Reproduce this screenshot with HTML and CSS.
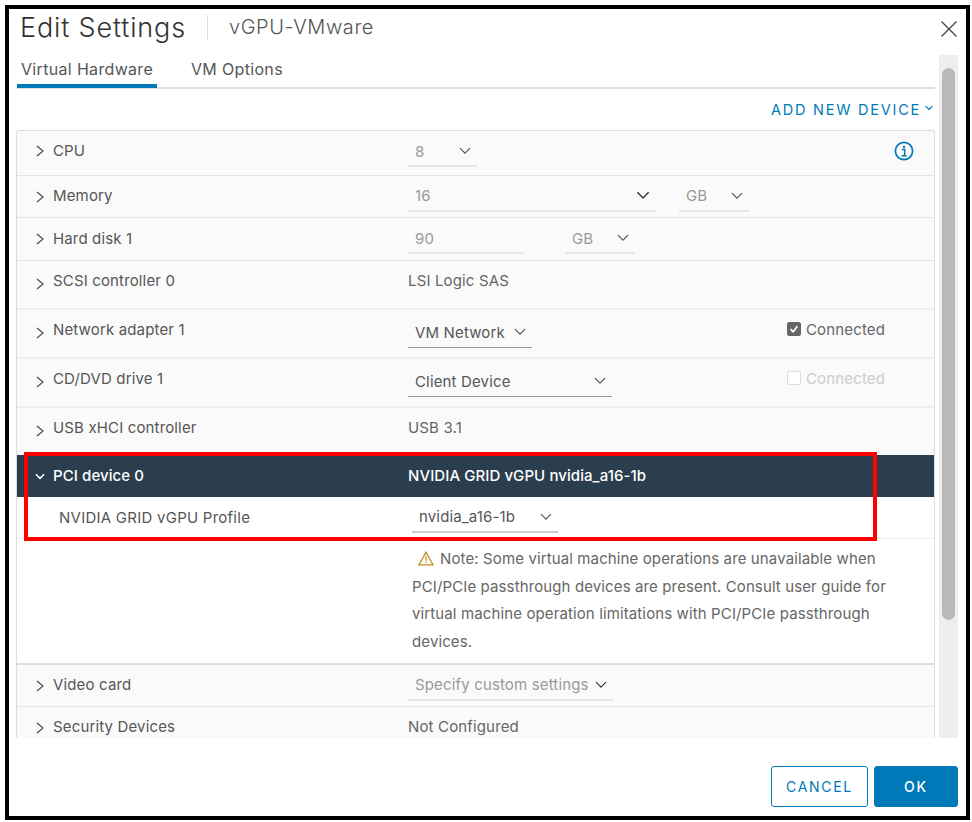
FILE: index.html
```html
<!DOCTYPE html>
<html lang="en">
<head>
<meta charset="utf-8">
<title>Edit Settings</title>
<link rel="stylesheet" href="styles.css">
</head>
<body>
<svg width="0" height="0" class="defs">
  <symbol id="chev-right" viewBox="0 0 8 12"><path d="M1 1l6 5-6 5" fill="none" stroke="currentColor" stroke-width="1.4"/></symbol>
  <symbol id="chev-down" viewBox="0 0 12 8"><path d="M1 1.2l5 5 5-5" fill="none" stroke="currentColor" stroke-width="1.2"/></symbol>
  <symbol id="chev-down-bold" viewBox="0 0 12 8"><path d="M1 1.2l5 5 5-5" fill="none" stroke="currentColor" stroke-width="1.8"/></symbol>
</svg>
<main class="dialog">
  <header class="head">
    <h1 class="title">Edit Settings</h1>
    <span class="vm-name">vGPU-VMware</span>
    <svg class="close" viewBox="0 0 16 16"><path d="M.5.5l15 15M15.5.5l-15 15" stroke="#444" stroke-width="1.3" fill="none"/></svg>
  </header>
  <div class="content">
    <div class="pane">
      <nav class="tabs">
        <span class="tab active">Virtual Hardware</span>
        <span class="tab">VM Options</span>
      </nav>
      <div class="actions">
        <span class="add-device">ADD NEW DEVICE</span>
        <svg class="add-chev"><use href="#chev-down-bold"/></svg>
      </div>
      <div class="table">
        <div class="row h45">
          <div class="label up6"><svg class="chev"><use href="#chev-right"/></svg>CPU</div>
          <div class="value up2">
            <div class="select off w69"><span>8</span><svg class="down"><use href="#chev-down"/></svg></div>
          </div>
          <svg class="info" viewBox="0 0 20 20"><circle cx="10" cy="10" r="8.6" fill="none" stroke="#0079b8" stroke-width="1.7"/><circle cx="10" cy="5.9" r="1.2" fill="#0079b8"/><path d="M7.8 8.6h2.9v6M7.6 14.8h5" fill="none" stroke="#0079b8" stroke-width="1.5"/></svg>
        </div>
        <div class="row h42">
          <div class="label up2"><svg class="chev"><use href="#chev-right"/></svg>Memory</div>
          <div class="value">
            <div class="select off w248"><span>16</span><svg class="down big"><use href="#chev-down"/></svg></div>
            <div class="select off w70 gap23"><span>GB</span><svg class="down"><use href="#chev-down"/></svg></div>
          </div>
        </div>
        <div class="row h43">
          <div class="label up2"><svg class="chev"><use href="#chev-right"/></svg>Hard disk 1</div>
          <div class="value">
            <div class="select off w116"><span>90</span></div>
            <div class="select off w70 gap41"><span>GB</span><svg class="down"><use href="#chev-down"/></svg></div>
          </div>
        </div>
        <div class="row h49">
          <div class="label up9"><svg class="chev low"><use href="#chev-right"/></svg>SCSI controller 0</div>
          <div class="value plain up9">LSI Logic SAS</div>
        </div>
        <div class="row h49">
          <div class="label up9"><svg class="chev low"><use href="#chev-right"/></svg>Network adapter 1</div>
          <div class="value up2">
            <div class="select on w124"><span>VM Network</span><svg class="down"><use href="#chev-down"/></svg></div>
          </div>
          <div class="check up8"><span class="box checked"><svg viewBox="0 0 14 14"><path d="M3 7.2l3 3 5-6.5" fill="none" stroke="#fff" stroke-width="2"/></svg></span>Connected</div>
        </div>
        <div class="row h49">
          <div class="label up9"><svg class="chev low"><use href="#chev-right"/></svg>CD/DVD drive 1</div>
          <div class="value up2">
            <div class="select on w204"><span>Client Device</span><svg class="down"><use href="#chev-down"/></svg></div>
          </div>
          <div class="check up8 muted"><span class="box"></span>Connected</div>
        </div>
        <div class="row h47">
          <div class="label up8"><svg class="chev low"><use href="#chev-right"/></svg>USB xHCI controller</div>
          <div class="value plain up8">USB 3.1</div>
        </div>
        <div class="row expanded">
          <div class="label strong up2"><svg class="chev-open"><use href="#chev-down-bold"/></svg>PCI device 0</div>
          <div class="value plain strong up2">NVIDIA GRID vGPU nvidia_a16-1b</div>
        </div>
        <div class="row sub">
          <div class="label sub-label">NVIDIA GRID vGPU Profile</div>
          <div class="value">
            <div class="select soft w146"><span>nvidia_a16-1b</span><svg class="down"><use href="#chev-down"/></svg></div>
          </div>
        </div>
        <div class="note">
          <p class="note-text"><svg class="warn" viewBox="0 0 16 15"><path d="M8 1.2l7 12.6H1z" fill="none" stroke="#c28b1a" stroke-width="1.3"/><path d="M8 5.2v4.6M8 10.8v1.5" stroke="#c28b1a" stroke-width="1.3"/></svg>Note: Some virtual machine operations are unavailable when PCI/PCIe passthrough devices are present. Consult user guide for virtual machine operation limitations with PCI/PCIe passthrough devices.</p>
        </div>
        <div class="row h42">
          <div class="label up2"><svg class="chev"><use href="#chev-right"/></svg>Video card</div>
          <div class="value">
            <div class="select off w205"><span>Specify custom settings</span><svg class="down dark"><use href="#chev-down"/></svg></div>
          </div>
        </div>
        <div class="row h43 last">
          <div class="label up4"><svg class="chev"><use href="#chev-right"/></svg>Security Devices</div>
          <div class="value plain up4">Not Configured</div>
        </div>
      </div>
    </div>
    <div class="scrollbar"><div class="thumb"></div></div>
  </div>
  <footer class="foot">
    <button class="btn outline">CANCEL</button>
    <button class="btn solid">OK</button>
  </footer>
  <div class="highlight"></div>
</main>
</body>
</html>
```
FILE: styles.css
```css
* { box-sizing: border-box; }
html, body { margin: 0; padding: 0; background: #fff; }
body {
  padding: 5px 2px 2px 5px;
  width: 972px;
  height: 822px;
  overflow: hidden;
  font-family: "Inter", "Liberation Sans", sans-serif;
  font-size: 15px;
  letter-spacing: .15px;
  color: #565656;
}
.defs { position: absolute; }

.dialog {
  position: relative;
  width: 965px;
  height: 815px;
  border: 4px solid #000;
  background: #fff;
  display: flex;
  flex-direction: column;
  overflow: hidden;
}

/* title bar */
.head {
  height: 46px;
  flex: none;
  display: flex;
  align-items: center;
  padding: 0 9px 10px 11px;
}
.title {
  margin: 0;
  font-size: 27px;
  font-weight: 300;
  letter-spacing: .85px;
  color: #333;
  padding-right: 21px;
  border-right: 1px solid #ddd;
  line-height: 25px;
}
.vm-name {
  margin-left: 21px;
  font-size: 20px;
  font-weight: 300;
  letter-spacing: .6px;
  color: #555;
}
.close { width: 16px; height: 16px; margin-left: auto; margin-top: 4px; }

/* main area */
.content { flex: none; height: 683px; display: flex; overflow: hidden; }
.pane { width: 919px; margin-left: 7px; flex: none; overflow: hidden; }
.scrollbar { width: 19px; margin-left: 4px; flex: none; background: #eee; padding: 13px 3px 0; }
.thumb { height: 552px; background: #b9b9b9; border-radius: 7px; }

/* tabs */
.tabs {
  height: 34px;
  margin-left: 1px;
  display: flex;
  border-bottom: 2px solid #ddd;
}
.tab {
  height: 33px;
  padding: 4px 4px 0;
  margin-right: 30px;
  font-size: 16px;
  letter-spacing: .33px;
  color: #565656;
  white-space: nowrap;
}
.tab.active { border-bottom: 4px solid #0079b8; width: 140px; }
.actions {
  height: 41px;
  display: flex;
  justify-content: flex-end;
  align-items: center;
  padding: 0 2px 1px 0;
  color: #0079b8;
}
.add-device { font-size: 14.5px; letter-spacing: 1.75px; }
.add-chev { width: 8px; height: 6px; margin-left: 4px; margin-bottom: 2px; }

/* hardware table */
.table {
  border: 1px solid #ddd;
  border-bottom: 0;
  border-radius: 3px 3px 0 0;
  background: #fafafa;
}
.row {
  display: flex;
  align-items: center;
  border-bottom: 1px solid #e4e4e4;
}
.h45 { height: 45px; }
.h43 { height: 43px; }
.h42 { height: 42px; }
.h47 { height: 47px; border-bottom: 0; }
.h49 { height: 49px; border-bottom-width: 2px; border-bottom-color: #eee; }
.last { border-bottom: 0; }
.label { width: 391px; flex: none; display: flex; align-items: center; }
.up2 { margin-bottom: 2px; }
.up4 { margin-bottom: 4px; }
.up6 { margin-bottom: 6px; }
.up8 { margin-bottom: 8px; }
.up9 { margin-bottom: 9px; }
.chev { width: 8px; height: 12px; margin: 2px 9px 0 19px; color: #555; }
.chev.low { margin-top: 7px; }
.value { display: flex; align-items: center; }
.value.plain { color: #666; }
.select {
  height: 30px;
  display: flex;
  align-items: center;
  justify-content: space-between;
  padding: 0 6px 0 7px;
  border-bottom: 1px solid #9a9a9a;
}
.select.off { color: #999; border-bottom: 2px solid #e6e6e6; }
.select.soft { border-bottom: 2px solid #ccc; }
.w69 { width: 69px; }
.w70 { width: 70px; }
.w116 { width: 116px; }
.w124 { width: 124px; }
.w146 { width: 146px; margin-left: 4px; }
.w204 { width: 204px; }
.w205 { width: 205px; }
.w248 { width: 248px; }
.gap23 { margin-left: 23px; }
.gap41 { margin-left: 41px; }
.down { width: 12px; height: 8px; color: #555; flex: none; }
.down.dark { color: #333; }
.down.big { width: 14px; height: 9px; color: #333; }
.info { width: 20px; height: 20px; margin-left: auto; margin-right: 20px; margin-bottom: 4px; }

.check {
  width: 147px;
  margin-left: auto;
  display: flex;
  align-items: center;
  color: #666;
}
.check.muted { color: #ccc; }
.box {
  width: 14px;
  height: 14px;
  margin-right: 5px;
  margin-top: -2px;
  border: 1px solid #ddd;
  border-radius: 2px;
  background: #fff;
}
.box.checked { background: #666; border-color: #666; }
.box svg { display: block; width: 12px; height: 12px; }

/* expanded device */
.expanded {
  height: 42px;
  background: #2a3e4d;
  border-bottom: 0;
  color: #fff;
}
.strong { color: #fff !important; font-weight: 500; letter-spacing: .08px; }
.chev-open { width: 10px; height: 7px; margin: 2px 8px 0 18px; color: #fff; }
.sub { height: 42px; background: #fff; border-bottom: 1px solid #eee; }
.sub-label { padding-left: 42px; letter-spacing: .25px; }
.note {
  height: 126px;
  background: #fff;
  padding: 6px 40px 0 395px;
  border-bottom: 2px solid #ddd;
}
.note-text { margin: 0; line-height: 27.5px; color: #666; letter-spacing: .12px; }
.warn { width: 16px; height: 15px; margin: 0 6px 0 6px; vertical-align: -2px; }

/* footer buttons */
.foot {
  flex: 1;
  display: flex;
  justify-content: flex-end;
  padding: 28px 8px 0 0;
}
.btn {
  height: 41px;
  font: inherit;
  font-size: 14px;
  letter-spacing: 1.7px;
  border-radius: 3px;
  padding: 0;
}
.btn.outline { width: 97px; background: #fff; border: 1px solid #0079b8; color: #0079b8; margin-right: 6px; }
.btn.solid { width: 84px; background: #0079b8; border: 1px solid #0079b8; color: #fff; font-weight: 500; }

/* red call-out frame over the PCI rows */
.highlight {
  position: absolute;
  left: 15px;
  top: 443px;
  width: 853px;
  height: 89px;
  border: 4px solid #f00;
  pointer-events: none;
}
```
